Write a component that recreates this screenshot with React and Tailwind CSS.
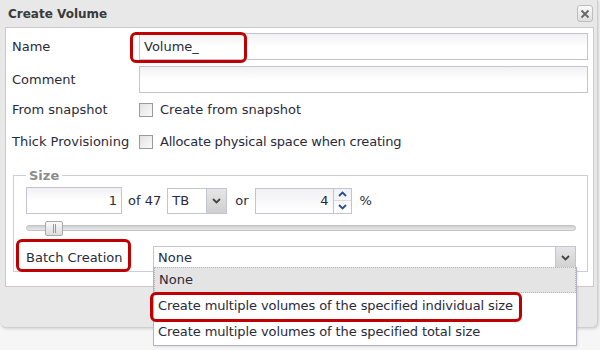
import React from 'react';

const font = { fontFamily: '"DejaVu Sans", Tahoma, Verdana, sans-serif' };

const inputBox =
  'h-[27px] border border-[#c3c3d6] bg-gradient-to-b from-[#f1f1f4] via-white to-white px-[4px] text-[13px] text-[#2a2a3a] outline-none';

function Checkbox() {
  return (
    <span className="inline-block h-[14px] w-[14px] border border-[#9a9a9a] bg-gradient-to-br from-[#e2e2e2] to-[#fafafa]" />
  );
}

function Chevron({ up = false, className = '' }) {
  return (
    <svg width="9" height="6" viewBox="0 0 9 6" className={className}>
      <path
        d={up ? 'M1 5 L4.5 1.5 L8 5' : 'M1 1 L4.5 4.5 L8 1'}
        fill="none"
        stroke="currentColor"
        strokeWidth="1.8"
      />
    </svg>
  );
}

function SelectArrow() {
  return (
    <div className="flex h-full w-[20px] items-center justify-center border-l border-[#c3c3d6] bg-gradient-to-b from-[#e6e6e6] to-[#cfcfcf] text-[#444]">
      <Chevron />
    </div>
  );
}

function Row({ label, children, height }) {
  return (
    <div className="flex items-center" style={{ height }}>
      <div className="w-[133px] shrink-0 pl-[6px] text-[13px] text-[#2a2a3a]">{label}</div>
      <div className="flex min-w-0 flex-1 items-center">{children}</div>
    </div>
  );
}

export default function App() {
  return (
    <div className="relative h-[350px] w-[600px] overflow-hidden bg-[#f6f6f6]" style={font}>
      <div className="h-[328px] w-[598px] rounded-b-[6px] border-r border-b border-[#cfcfcf] bg-[#e8e8e8] shadow-[1px_1px_3px_rgba(0,0,0,0.15)]">
        <div className="flex h-[27px] items-center justify-between pl-[8px] pr-[4px]">
          <span className="text-[12px] font-bold text-[#3a3a3a]">Create Volume</span>
          <button
            type="button"
            className="flex h-[17px] w-[16px] items-center justify-center rounded-[3px] border border-[#bdbdbd] bg-gradient-to-b from-[#fafafa] to-[#dedede] text-[#666]"
          >
            <svg width="10" height="10" viewBox="0 0 10 10">
              <path d="M1.5 1.5 L8.5 8.5 M8.5 1.5 L1.5 8.5" stroke="currentColor" strokeWidth="1.8" />
            </svg>
          </button>
        </div>

        <div className="ml-[5px] mr-[3px] h-[260px] border border-[#cfc7c7] bg-white pt-[5px] pr-[5px]">
          <Row label="Name" height={27}>
            <div className={`${inputBox} flex w-full items-center`}>Volume_</div>
          </Row>
          <div className="h-[6px]" />
          <Row label="Comment" height={27}>
            <div className={`${inputBox} w-full`} />
          </Row>
          <Row label="From snapshot" height={33}>
            <Checkbox />
            <span className="ml-[7px] text-[13px] text-[#2a2a3a]">Create from snapshot</span>
          </Row>
          <Row label="Thick Provisioning" height={32}>
            <Checkbox />
            <span className="ml-[7px] text-[13px] tracking-[-0.2px] text-[#2a2a3a]">Allocate physical space when creating</span>
          </Row>

          <fieldset className="mt-[8px] ml-[7px] h-[106px] border border-[#cdcdd8] pr-[11px] pl-[12px]">
            <legend className="px-[3px] text-[13px] font-bold text-[#8c8c8c]">Size</legend>
            <div className="mt-[2px] flex h-[26px] items-center text-[13px] text-[#2a2a3a]">
              <div className={`${inputBox} flex h-[26px] w-[96px] items-center justify-end`}>1</div>
              <span className="ml-[6px]">of 47</span>
              <div className="ml-[6px] flex h-[26px] w-[60px] items-center border border-[#c3c3d6] bg-white">
                <span className="flex-1 pl-[4px]">TB</span>
                <SelectArrow />
              </div>
              <span className="ml-[8px]">or</span>
              <div className="ml-[6px] flex h-[26px] w-[97px] items-center border border-[#c3c3d6] bg-gradient-to-b from-[#f1f1f4] to-white">
                <span className="flex-1 pr-[4px] text-right">4</span>
                <div className="flex h-full w-[18px] flex-col border-l border-[#c3c3d6] text-[#2b4c8c]">
                  <div className="flex flex-1 items-center justify-center border-b border-[#dcdce6]">
                    <Chevron up />
                  </div>
                  <div className="flex flex-1 items-center justify-center">
                    <Chevron />
                  </div>
                </div>
              </div>
              <span className="ml-[8px]">%</span>
            </div>

            <div className="relative mt-[7px] flex h-[15px] items-center">
              <div className="h-[6px] w-[550px] rounded-full border border-[#c4c4c4] bg-gradient-to-b from-[#d0d0d0] to-[#e8e8e8]" />
              <div className="absolute top-0 left-[19px] flex h-[15px] w-[18px] items-center justify-center rounded-[2px] border border-[#a9a9a9] bg-gradient-to-b from-[#fbfbfb] to-[#dcdcdc]">
                <span className="h-[9px] w-[3px] border-x border-[#9a9a9a]" />
              </div>
            </div>

            <div className="mt-[10px] flex h-[24px] items-center">
              <span className="w-[127px] shrink-0 text-[13px] text-[#2a2a3a]">Batch Creation</span>
              <div className="flex h-[24px] flex-1 items-center border border-[#c3c3d6] bg-white">
                <span className="flex-1 pl-[4px] text-[13px] text-[#2a2a3a]">None</span>
                <SelectArrow />
              </div>
            </div>
          </fieldset>
        </div>
      </div>

      <div className="absolute top-[267px] left-[153px] w-[424px] border border-t-0 border-[#b3b3c4] bg-white text-[13px] text-[#2a2a3a] shadow-[1px_1px_2px_rgba(0,0,0,0.1)]">
        <div className="flex h-[26px] items-center border border-dotted border-[#b9b9b9] bg-[#e4e4e4] pl-[4px]">None</div>
        <div className="flex h-[26px] items-center pl-[4px] tracking-[-0.1px]">
          Create multiple volumes of the specified individual size
        </div>
        <div className="flex h-[26px] items-center pl-[4px] tracking-[-0.1px]">
          Create multiple volumes of the specified total size
        </div>
      </div>

      <div className="absolute top-[32px] left-[130px] h-[31px] w-[117px] rounded-[6px] border-[3px] border-[#c00000]" />
      <div className="absolute top-[239px] left-[16px] h-[33px] w-[115px] rounded-[6px] border-[3px] border-[#c00000]" />
      <div className="absolute top-[292px] left-[150px] h-[30px] w-[372px] rounded-[6px] border-[3px] border-[#c00000]" />
    </div>
  );
}
